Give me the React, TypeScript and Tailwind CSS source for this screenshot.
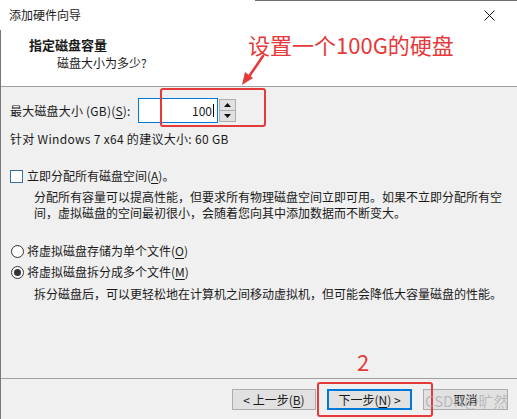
import React from "react";

const U = ({ c }: { c: string }) => <span className="underline underline-offset-2">{c}</span>;

export default function App() {
  return (
    <div
      className="relative w-[517px] h-[419px] overflow-hidden bg-[#f0f0f0] text-[12px] text-[#1a1a1a]"
      style={{ fontFamily: '"Noto Sans CJK SC", "Noto Sans", sans-serif' }}
    >
      {/* title bar */}
      <div className="relative h-[30px] bg-white flex items-center justify-between pl-[9px] pr-[22px]">
        <div className="absolute top-0 right-0 left-[255px] h-px bg-[#6e6e6e]" />
        <span className="leading-none">添加硬件向导</span>
        <svg width="11" height="11" viewBox="0 0 11 11" className="mt-[1px]">
          <path d="M0.5 0.5 L10.5 10.5 M10.5 0.5 L0.5 10.5" stroke="#111" strokeWidth="1" />
        </svg>
      </div>

      <div className="flex flex-col h-[389px] border-l border-[#777]">
        {/* header */}
        <div className="h-[57px] bg-white border-b border-[#a0a0a0] flex flex-col pl-[28px] pt-[6px]">
          <div className="font-bold text-[13px] leading-[18px]">指定磁盘容量</div>
          <div className="pl-[28px] leading-[18px]">磁盘大小为多少?</div>
        </div>

        {/* body */}
        <div className="flex-1 flex flex-col pl-[9px]">
          <div className="mt-[11px] flex items-center h-[25px]">
            <span className="w-[128px] tracking-[0.2px]">
              最大磁盘大小 (GB)(<U c="S" />):
            </span>
            <div className="h-[25px] w-[80px] border border-[#0078d7] bg-white flex items-center justify-end pr-[3px]">
              <span>100</span>
              <span className="w-px h-[13px] bg-black ml-[1px]" />
            </div>
            <div className="ml-[1px] h-[23px] w-[17px] border border-[#adadad] bg-[#e1e1e1] flex flex-col">
              <div className="flex-1 flex items-center justify-center border-b border-[#adadad]">
                <svg width="7" height="4" viewBox="0 0 7 4"><path d="M3.5 0 L7 4 L0 4 Z" fill="#111" /></svg>
              </div>
              <div className="flex-1 flex items-center justify-center">
                <svg width="7" height="4" viewBox="0 0 7 4"><path d="M0 0 L7 0 L3.5 4 Z" fill="#111" /></svg>
              </div>
            </div>
          </div>

          <div className="mt-[8px] leading-[16px] tracking-[0.3px]">针对 Windows 7 x64 的建议大小: 60 GB</div>

          <div className="mt-[21px] flex items-center h-[16px]">
            <span className="w-[13px] h-[13px] border border-[#3a6ea5] bg-white" />
            <span className="ml-[4px]">
              立即分配所有磁盘空间(<U c="A" />)。
            </span>
          </div>
          <div className="mt-[5px] pl-[24px] leading-[16px]">
            分配所有容量可以提高性能，但要求所有物理磁盘空间立即可用。如果不立即分配所有空
            <br />
            间，虚拟磁盘的空间最初很小，会随着您向其中添加数据而不断变大。
          </div>

          <div className="mt-[22px] flex items-center h-[16px]">
            <span className="ml-[1px] w-[13px] h-[13px] rounded-full border border-[#333] bg-white" />
            <span className="ml-[3px]">
              将虚拟磁盘存储为单个文件(<U c="O" />)
            </span>
          </div>
          <div className="mt-[5px] flex items-center h-[16px]">
            <span className="ml-[1px] w-[13px] h-[13px] rounded-full border border-[#333] bg-white flex items-center justify-center">
              <span className="w-[7px] h-[7px] rounded-full bg-[#333]" />
            </span>
            <span className="ml-[3px]">
              将虚拟磁盘拆分成多个文件(<U c="M" />)
            </span>
          </div>
          <div className="mt-[6px] pl-[24px] leading-[16px]">
            拆分磁盘后，可以更轻松地在计算机之间移动虚拟机，但可能会降低大容量磁盘的性能。
          </div>

          <div className="flex-1" />
        </div>

        {/* separator */}
        <div className="h-px bg-[#a0a0a0]" />

        {/* footer */}
        <div className="h-[40px] flex items-start justify-end pt-[10px] pr-[9px] gap-[11px]">
          <div className="w-[84px] h-[21px] border border-[#adadad] bg-[#e1e1e1] flex items-center justify-center">
            &lt; 上一步(<U c="B" />)
          </div>
          <div className="w-[85px] h-[21px] border-2 border-[#0078d7] bg-[#e1e1e1] flex items-center justify-center">
            下一步(<U c="N" />) &gt;
          </div>
          <div className="relative w-[85px] h-[21px] border border-[#adadad] bg-[#e1e1e1] flex items-center justify-center">
            取消
          </div>
        </div>
      </div>

      {/* annotations */}
      <div className="absolute left-[248px] top-[30px] text-[22px] leading-[28px] text-[#e5393a]">设置一个100G的硬盘</div>
      <svg className="absolute left-[236px] top-[54px]" width="32" height="36" viewBox="0 0 32 36">
        <path d="M27 2 L12 24" stroke="#e5393a" strokeWidth="2.5" strokeLinecap="round" />
        <path d="M6 31 L9 18 L17 24 Z" fill="#e5393a" />
      </svg>
      <div className="absolute left-[160px] top-[88px] w-[106px] h-[39px] border-2 border-[#e5393a] rounded-[3px]" />

      <div className="absolute left-[357px] top-[347px] text-[22px] leading-[28px] text-[#e5393a]">2</div>
      <div className="absolute left-[317px] top-[382px] w-[116px] h-[35px] border-2 border-[#e5393a] rounded-[3px]" />

      <div className="absolute left-[425px] top-[390px] text-[15px] leading-[22px] text-[#a8a8a8]/70">CSDN@旷然</div>
    </div>
  );
}
